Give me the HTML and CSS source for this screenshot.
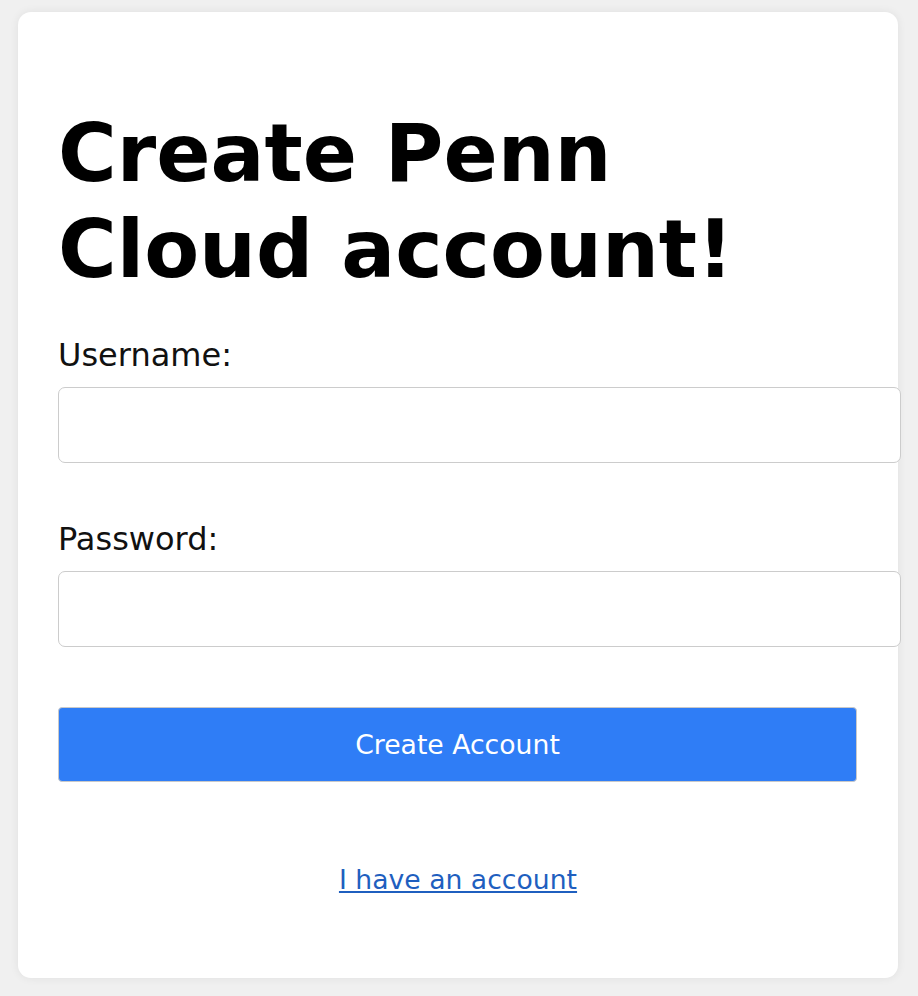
FILE: index.html
```html
<!DOCTYPE html>
<html lang="en">
<head>
<meta charset="utf-8">
<title>Create Penn Cloud account</title>
<link rel="stylesheet" href="styles.css">
</head>
<body>
<main class="card">
  <h1 class="title">Create Penn Cloud account!</h1>
  <form class="form">
    <label class="label" for="username">Username:</label>
    <input class="field" id="username" type="text">
    <label class="label label-second" for="password">Password:</label>
    <input class="field" id="password" type="password">
    <button class="submit" type="button">Create Account</button>
  </form>
  <p class="switch"><a class="switch-link" href="#">I have an account</a></p>
</main>
</body>
</html>
```

FILE: styles.css
```css
html, body {
  margin: 0;
  padding: 0;
}
body {
  background: #f0f0f0;
  font-family: "DejaVu Sans", sans-serif;
  color: #000;
  padding: 12px 20px 18px 18px;
}
.card {
  box-sizing: border-box;
  width: 880px;
  height: 966px;
  background: #fff;
  border-radius: 13px;
  box-shadow: 0 0 10px rgba(0, 0, 0, 0.07);
  padding: 40px 40px;
}
.title {
  font-size: 80px;
  font-weight: bold;
  line-height: 96px;
  margin: 54px 0 39px;
  width: 720px;
}
.form {
  display: flex;
  flex-direction: column;
  align-items: flex-start;
  margin: 0;
}
.label {
  font-size: 32px;
  line-height: 37px;
  color: #111;
}
.label-second {
  margin-top: 58px;
}
.field {
  box-sizing: border-box;
  width: 843px;
  height: 76px;
  margin-top: 13px;
  border: 1px solid #cccccc;
  border-radius: 7px;
  padding: 0 20px;
  font-family: "DejaVu Sans", sans-serif;
  font-size: 26.67px;
  background: #fff;
}
.submit {
  box-sizing: border-box;
  width: 799px;
  height: 75px;
  margin-top: 60px;
  background: #2f7df6;
  color: #fff;
  border: 1px solid #c9c9c9;
  border-radius: 4px;
  font-family: "DejaVu Sans", sans-serif;
  font-size: 26.67px;
  padding: 0;
}
.switch {
  margin: 82px 0 0;
  text-align: center;
  font-size: 26.67px;
  line-height: 31px;
}
.switch-link {
  color: #1f5fbf;
  text-decoration: underline;
}
```
